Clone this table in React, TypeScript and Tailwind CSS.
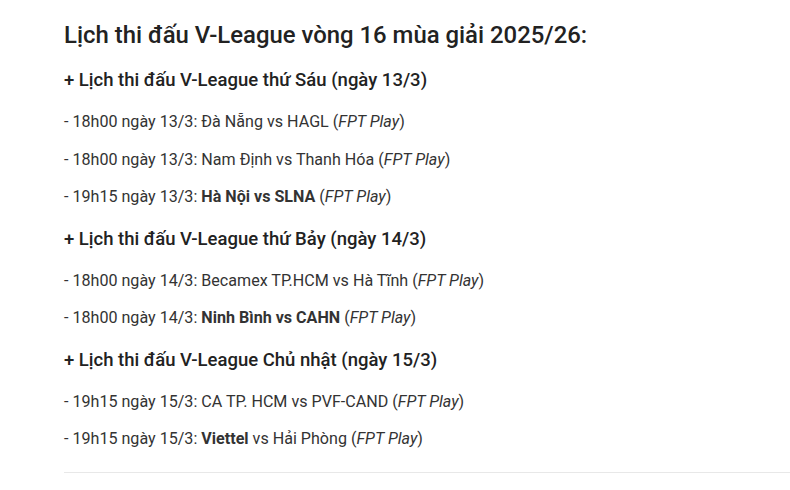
import React from "react";

const Body = ({ children }: { children: React.ReactNode }) => (
  <p className="text-[16.1px] leading-[37.5px] text-[#333]">{children}</p>
);
const Sub = ({ children }: { children: React.ReactNode }) => (
  <h3 className="text-[18.5px] leading-[46px] font-medium text-[#222]">{children}</h3>
);
const FPT = () => (
  <>
    (<em>FPT Play</em>)
  </>
);

export default function App() {
  return (
    <div className="w-[790px] h-[490px] bg-white overflow-hidden" style={{ fontFamily: "Roboto, 'Noto Sans', sans-serif" }}>
      <div className="pl-[64px] pt-[15px]">
        <h2 className="text-[23.9px] leading-[40px] font-medium text-[#222] mb-[2px]">
          Lịch thi đấu V-League vòng 16 mùa giải 2025/26:
        </h2>
        <Sub>+ Lịch thi đấu V-League thứ Sáu (ngày 13/3)</Sub>
        <Body>- 18h00 ngày 13/3: Đà Nẵng vs HAGL <FPT /></Body>
        <Body>- 18h00 ngày 13/3: Nam Định vs Thanh Hóa <FPT /></Body>
        <Body>
          - 19h15 ngày 13/3: <strong className="font-bold">Hà Nội vs SLNA</strong> <FPT />
        </Body>
        <Sub>+ Lịch thi đấu V-League thứ Bảy (ngày 14/3)</Sub>
        <Body>- 18h00 ngày 14/3: Becamex TP.HCM vs Hà Tĩnh <FPT /></Body>
        <Body>
          - 18h00 ngày 14/3: <strong className="font-bold">Ninh Bình vs CAHN</strong> <FPT />
        </Body>
        <Sub>+ Lịch thi đấu V-League Chủ nhật (ngày 15/3)</Sub>
        <Body>- 19h15 ngày 15/3: CA TP. HCM vs PVF-CAND <FPT /></Body>
        <Body>
          - 19h15 ngày 15/3: <strong className="font-bold">Viettel</strong> vs Hải Phòng <FPT />
        </Body>
        <div className="mt-[14px] h-px bg-[#e8e8e8]" />
      </div>
    </div>
  );
}
